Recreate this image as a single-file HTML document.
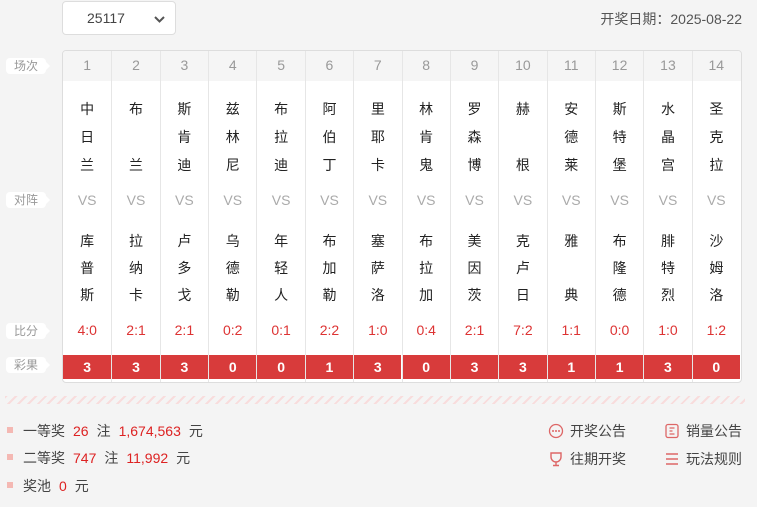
<!DOCTYPE html><html><head><meta charset="utf-8"><style>
*{margin:0;padding:0;box-sizing:border-box}
body{width:757px;height:507px;background:#f4f4f4;font-family:"Liberation Sans","Noto Sans CJK SC",sans-serif;position:relative;overflow:hidden;color:#333}
.sel{position:absolute;left:62px;top:1px;width:114px;height:34px;background:#fff;border:1px solid #ddd;border-radius:4px;font-size:14px;color:#444;padding:8px 0 0 24px}
.sel svg{position:absolute;right:10px;top:14px}
.date{position:absolute;right:15px;top:9px;font-size:14px;color:#555}
.lab{position:absolute;left:6px;width:40px;height:16px;background:#fff;border-radius:4px;font-size:12px;color:#999;text-align:center;line-height:16px}
.lab:after{content:"";position:absolute;right:-4px;top:4px;border-left:4px solid #fff;border-top:4px solid transparent;border-bottom:4px solid transparent}
.tbl{position:absolute;left:62px;top:50px;width:680px;height:333px;background:#fff;border:1px solid #ddd;border-radius:4px;overflow:hidden}
.hd{position:absolute;left:0;top:0;width:100%;height:30px;background:#f5f5f5}
.col{position:absolute;top:0;height:100%;border-left:1px solid #e6e6e6;text-align:center}
.col div{position:absolute;left:0;width:100%}
.n{top:6px;font-size:14px;color:#999}
.t{font-size:14px;color:#222}
.vs{top:141px;font-size:14px;color:#aaa}
.sc{top:271px;font-size:14px;color:#d33}
.r{top:304px;height:24px;background:#d83b3b;color:#fff;font-weight:bold;font-size:14px;line-height:24px}
.stripe{position:absolute;left:5px;top:396px;width:740px;height:8px;background:repeating-linear-gradient(135deg,#f8dcdc 0 2px,transparent 2px 7px)}
.p{position:absolute;left:7px;font-size:14px;color:#444}
.p i{display:inline-block;width:6px;height:6px;background:#f4b8b3;margin-right:10px;vertical-align:3px}
.p b{font-weight:normal;color:#d22;margin:0 8px}
.lk{position:absolute;font-size:14px;color:#444}
.lk svg{vertical-align:-3px;margin-right:6px}
</style></head><body>
<div class="sel">25117<svg width="11" height="7" viewBox="0 0 11 7"><path d="M1 1l4.5 4.5L10 1" stroke="#555" stroke-width="2" fill="none"/></svg></div>
<div class="date">开奖日期：2025-08-22</div>
<div class="lab" style="top:58px">场次</div>
<div class="lab" style="top:192px">对阵</div>
<div class="lab" style="top:323px">比分</div>
<div class="lab" style="top:357px">彩果</div>
<div class="tbl"><div class="hd"></div><div id="c"></div></div>
<div class="stripe"></div>
<div class="p" style="top:421px"><i></i>一等奖<b>26</b>注<b>1,674,563</b>元</div>
<div class="p" style="top:448px"><i></i>二等奖<b>747</b>注<b>11,992</b>元</div>
<div class="p" style="top:476px"><i></i>奖池<b>0</b>元</div>
<div class="lk" style="left:548px;top:421px"><svg width="16" height="16"><circle cx="8" cy="8" r="6.5" stroke="#d66" fill="none" stroke-width="1.3"/><circle cx="5" cy="8" r="1" fill="#d66"/><circle cx="8" cy="8" r="1" fill="#d66"/><circle cx="11" cy="8" r="1" fill="#d66"/></svg>开奖公告</div>
<div class="lk" style="left:664px;top:421px"><svg width="16" height="16"><rect x="2" y="1.5" width="12" height="13" rx="2" stroke="#d66" fill="none" stroke-width="1.3"/><path d="M5.5 5h5M5.5 8h3M5.5 11h5" stroke="#d66" stroke-width="1.2"/></svg>销量公告</div>
<div class="lk" style="left:548px;top:449px"><svg width="16" height="16"><path d="M3 2h10v4a5 5 0 0 1-10 0z M8 11v3M5 14.5h6" stroke="#d66" fill="none" stroke-width="1.4"/></svg>往期开奖</div>
<div class="lk" style="left:664px;top:449px"><svg width="16" height="16"><path d="M2 3h12M2 8h12M2 13h12" stroke="#d66" stroke-width="1.5"/></svg>玩法规则</div>
<script>
var h=["中日兰","布 兰","斯肯迪","兹林尼","布拉迪","阿伯丁","里耶卡","林肯鬼","罗森博","赫 根","安德莱","斯特堡","水晶宫","圣克拉"];
var a=["库普斯","拉纳卡","卢多戈","乌德勒","年轻人","布加勒","塞萨洛","布拉加","美因茨","克卢日","雅 典","布隆德","腓特烈","沙姆洛"];
var s=["4:0","2:1","2:1","0:2","0:1","2:2","1:0","0:4","2:1","7:2","1:1","0:0","1:0","1:2"];
var r=[3,3,3,0,0,1,3,0,3,3,1,1,3,0];
var o="",w=677/14;
for(var i=0;i<14;i++){var x=i*w;o+='<div class="col" style="left:'+x+'px;width:'+w+'px;'+(i==0?'border-left:none':'')+'"><div class="n">'+(i+1)+'</div>';
for(var j=0;j<3;j++){o+='<div class="t" style="top:'+(48+j*28)+'px">'+h[i][j]+'</div><div class="t" style="top:'+(180+j*27)+'px">'+a[i][j]+'</div>';}
o+='<div class="vs">VS</div><div class="sc">'+s[i]+'</div><div class="r">'+r[i]+'</div></div>';}
document.getElementById("c").innerHTML=o;
</script>
</body></html>
